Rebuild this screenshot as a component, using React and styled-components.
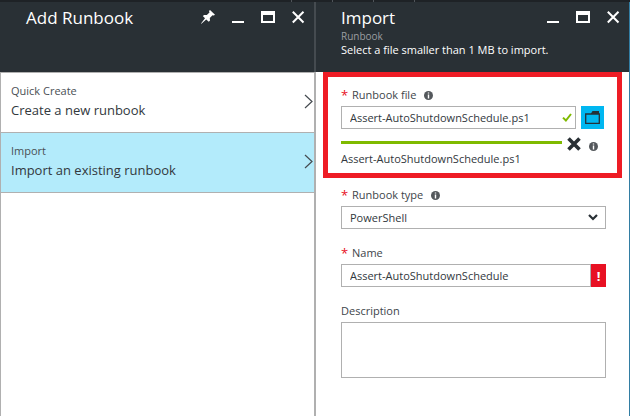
import React from "react";
import styled, { createGlobalStyle, css } from "styled-components";

const GlobalStyle = createGlobalStyle`
  *, *::before, *::after { box-sizing: border-box; }
  html, body { margin: 0; padding: 0; background: #fff; }
  body, button, input, select, textarea {
    font-family: "Open Sans", "Noto Sans", sans-serif;
    font-size: 11px;
    color: #32383d;
  }
  h1, p { margin: 0; }
`;

const Page = styled.div`
  display: flex;
  flex-direction: column;
  min-height: 100vh;
`;

const TopStrip = styled.div`
  display: flex;
  height: 2px;
  padding-left: 291px;
  background: #1e2226;
`;

const Tick = styled.span`
  width: 41px;
  border-left: 1px solid #50555a;
`;

const Blades = styled.main`
  flex: 1;
  display: grid;
  grid-template-columns: 158fr 157fr;
`;

const Blade = styled.section`
  display: flex;
  flex-direction: column;
  min-width: 0;
`;

const BladeHeader = styled.header`
  display: flex;
  justify-content: space-between;
  align-items: flex-start;
  height: 70px;
  padding: 5px 9px 0 ${(p) => (p.$divided ? "26px" : "25px")};
  background: #293035;
  color: #fff;
  border-right: ${(p) => (p.$divided ? "2px solid #454b50" : "1px solid #327da3")};
`;

const Heading = styled.div`
  min-width: 0;
  white-space: nowrap;
`;

const Title = styled.h1`
  font-size: 17px;
  line-height: 22px;
  font-weight: 400;
`;

const Subtitle = styled.p`
  font-size: 10px;
  line-height: 14px;
  color: #9b9ea1;
`;

const Hint = styled.p`
  font-size: 11px;
  line-height: 14px;
`;

const WindowControls = styled.div`
  display: flex;
  gap: 16px;
  padding-top: 3px;
  flex: none;
`;

const IconButton = styled.button`
  display: flex;
  align-items: center;
  justify-content: center;
  width: 14px;
  height: 14px;
  padding: 0;
  border: 0;
  background: none;
  color: inherit;
`;

const BladeBody = styled.div`
  flex: 1;
  background: #fff;
  border: 0 solid #b0b0b0;
  border-width: ${(p) => (p.$list ? "1px 2px 0 1px" : "0 1px 0 0")};
  ${(p) => !p.$list && css`border-color: #327da3;`}
`;

const Choice = styled.button`
  display: flex;
  align-items: center;
  justify-content: space-between;
  width: 100%;
  height: 60px;
  padding: 0 1px 2px 10px;
  border: 0;
  border-bottom: 1px solid #b0b0b0;
  background: ${(p) => (p.$selected ? "#b3ebfb" : "#fff")};
  text-align: left;
`;

const ChoiceText = styled.span`
  display: flex;
  flex-direction: column;
`;

const ChoiceKind = styled.span`
  line-height: 18px;
  color: #4a4f54;
`;

const ChoiceName = styled.span`
  font-size: 13px;
  line-height: 21px;
`;

const Highlight = styled.div`
  margin: 0 7px;
  padding: 10px 11px 6px 13px;
  border: 5px solid #ee1c25;
`;

const Form = styled.form`
  display: flex;
  flex-direction: column;
  gap: 9px;
`;

const Fields = styled.div`
  display: flex;
  flex-direction: column;
  gap: 16px;
  padding: 0 23px 0 25px;
`;

const Field = styled.div`
  display: flex;
  flex-direction: column;
  gap: 3px;
`;

const LabelRow = styled.div`
  display: flex;
  align-items: center;
  gap: 8px;
  height: 16px;
`;

const Label = styled.label`
  display: flex;
  gap: 5px;
  line-height: 16px;
  color: #40454a;
`;

const Required = styled.span`
  width: 6px;
  font-size: 13px;
  color: #e81123;
`;

const ControlRow = styled.div`
  display: flex;
  gap: ${(p) => (p.$spaced ? "5px" : "0")};
  padding-right: ${(p) => (p.$spaced ? "2px" : "0")};
`;

const boxed = css`
  height: 23px;
  border: 1px solid #b0b0b0;
  border-radius: 0;
  background: #fff;
`;

const InputBox = styled.div`
  ${boxed}
  display: flex;
  align-items: center;
  flex: 1;
  min-width: 0;
  padding: 0 3px 0 8px;
`;

const TextInput = styled.input`
  flex: 1;
  width: 0;
  min-width: 0;
  height: 21px;
  padding: 0;
  border: 0;
  outline: 0;
  background: none;
`;

const FolderButton = styled(IconButton)`
  width: 23px;
  height: 23px;
  background: #00b7f1;
  color: #243038;
`;

const ErrorFlag = styled.span`
  display: flex;
  align-items: center;
  justify-content: center;
  width: 15px;
  height: 23px;
  background: #e81123;
  color: #fff;
  font-size: 13px;
  font-weight: 700;
`;

const SelectBox = styled.div`
  display: grid;
  align-items: center;
  > * { grid-area: 1 / 1; }
  > svg { justify-self: end; margin-right: 8px; pointer-events: none; }
`;

const Select = styled.select`
  ${boxed}
  width: 100%;
  padding: 0 24px 0 8px;
  appearance: none;
`;

const TextArea = styled.textarea`
  ${boxed}
  display: block;
  width: 100%;
  height: 56px;
  resize: none;
`;

const UploadRow = styled.div`
  display: flex;
  align-items: center;
  height: 14px;
  margin-top: 8px;
  padding-right: 8px;
  gap: 5px;
`;

const Progress = styled.div`
  flex: 1;
  height: 3px;
  margin-bottom: 3px;
  background: #7fba00;
`;

const InfoSlot = styled.span`
  display: flex;
  align-self: flex-end;
  margin-left: 3px;
`;

const FileName = styled.p`
  line-height: 16px;
`;

const PinIcon = () => (
  <svg width="14" height="14" viewBox="0 0 14 14" fill="currentColor" aria-hidden="true">
    <path d="M9 0 14 4.8 12.8 5.6 11.5 5.2 8.8 8 9 10.6 7.8 11.8 5.2 9.4 0.4 13.8 0 13.4 4 8.2 1.8 6 3.2 5 5.8 5.1 8.5 2.6 8 1z" />
  </svg>
);

const MinimizeIcon = () => (
  <svg width="14" height="14" viewBox="0 0 14 14" aria-hidden="true">
    <path d="M1 11h12v2H1z" fill="currentColor" />
  </svg>
);

const MaximizeIcon = () => (
  <svg width="14" height="14" viewBox="0 0 14 14" aria-hidden="true">
    <path d="M0 1h14v12H0zM2 5v6h10V5z" fill="currentColor" fillRule="evenodd" />
  </svg>
);

const CloseIcon = () => (
  <svg width="14" height="14" viewBox="0 0 14 14" aria-hidden="true">
    <path d="M1.8 1.8 12.5 12.5M12.5 1.8 1.8 12.5" stroke="currentColor" strokeWidth="2" fill="none" />
  </svg>
);

const ChevronRight = () => (
  <svg width="9" height="15" viewBox="0 0 9 15" aria-hidden="true">
    <path d="M1 1 8 7.5 1 14" stroke="#454b50" strokeWidth="1.2" fill="none" />
  </svg>
);

const ChevronDown = () => (
  <svg width="10" height="7" viewBox="0 0 10 7" aria-hidden="true">
    <path d="M1 1 5 5 9 1" stroke="#293035" strokeWidth="2.2" fill="none" />
  </svg>
);

const InfoIcon = () => (
  <svg width="9" height="9" viewBox="0 0 9 9" role="img" aria-label="Information">
    <circle cx="4.5" cy="4.5" r="4.5" fill="#54585c" />
    <path d="M3.8 1.4h1.4v1.2H3.8zM3.8 3.5h1.4v4H3.8z" fill="#fff" />
  </svg>
);

const CheckIcon = () => (
  <svg width="10" height="9" viewBox="0 0 10 9" role="img" aria-label="Valid">
    <path d="M1 4.6 3.9 7.5 9 1" stroke="#7fba00" strokeWidth="2" fill="none" />
  </svg>
);

const FolderIcon = () => (
  <svg width="15" height="13" viewBox="0 0 15 13" aria-hidden="true">
    <path d="M6 2.5 7.5 0H14V3H6z" fill="currentColor" />
    <path d="M.7 3H14.3V12.3H.7z" stroke="currentColor" strokeWidth="1.3" fill="none" />
  </svg>
);

const RemoveIcon = () => (
  <svg width="14" height="14" viewBox="0 0 14 14" aria-hidden="true">
    <path d="M1.5 1.5 12.5 12.5M12.5 1.5 1.5 12.5" stroke="#293035" strokeWidth="3.6" fill="none" />
  </svg>
);

function Controls({ pinned }) {
  return (
    <WindowControls>
      {pinned && <IconButton type="button" aria-label="Pin"><PinIcon /></IconButton>}
      <IconButton type="button" aria-label="Minimize"><MinimizeIcon /></IconButton>
      <IconButton type="button" aria-label="Maximize"><MaximizeIcon /></IconButton>
      <IconButton type="button" aria-label="Close"><CloseIcon /></IconButton>
    </WindowControls>
  );
}

function ChoiceRow({ kind, name, selected }) {
  return (
    <Choice type="button" $selected={selected} aria-pressed={!!selected}>
      <ChoiceText>
        <ChoiceKind>{kind}</ChoiceKind>
        <ChoiceName>{name}</ChoiceName>
      </ChoiceText>
      <ChevronRight />
    </Choice>
  );
}

function FieldLabel({ id, required, info, children }) {
  return (
    <LabelRow>
      <Label htmlFor={id}>
        {required && <Required>*</Required>}
        {children}
      </Label>
      {info && <InfoIcon />}
    </LabelRow>
  );
}

export default function App() {
  return (
    <Page>
      <GlobalStyle />
      <TopStrip>
        <Tick /><Tick /><Tick /><Tick />
      </TopStrip>
      <Blades>
        <Blade>
          <BladeHeader $divided>
            <Heading><Title>Add Runbook</Title></Heading>
            <Controls pinned />
          </BladeHeader>
          <BladeBody $list>
            <ChoiceRow kind="Quick Create" name="Create a new runbook" />
            <ChoiceRow kind="Import" name="Import an existing runbook" selected />
          </BladeBody>
        </Blade>
        <Blade>
          <BladeHeader>
            <Heading>
              <Title>Import</Title>
              <Subtitle>Runbook</Subtitle>
              <Hint>Select a file smaller than 1 MB to import.</Hint>
            </Heading>
            <Controls />
          </BladeHeader>
          <BladeBody>
            <Form>
              <Highlight>
                <Field>
                  <FieldLabel id="file" required info>Runbook file</FieldLabel>
                  <ControlRow $spaced>
                    <InputBox>
                      <TextInput id="file" defaultValue="Assert-AutoShutdownSchedule.ps1" />
                      <CheckIcon />
                    </InputBox>
                    <FolderButton type="button" aria-label="Browse"><FolderIcon /></FolderButton>
                  </ControlRow>
                </Field>
                <UploadRow>
                  <Progress role="progressbar" aria-valuenow={100} aria-label="Upload" />
                  <IconButton type="button" aria-label="Remove file"><RemoveIcon /></IconButton>
                  <InfoSlot><InfoIcon /></InfoSlot>
                </UploadRow>
                <FileName>Assert-AutoShutdownSchedule.ps1</FileName>
              </Highlight>
              <Fields>
                <Field>
                  <FieldLabel id="type" required info>Runbook type</FieldLabel>
                  <SelectBox>
                    <Select id="type" defaultValue="PowerShell"><option>PowerShell</option></Select>
                    <ChevronDown />
                  </SelectBox>
                </Field>
                <Field>
                  <FieldLabel id="name" required>Name</FieldLabel>
                  <ControlRow>
                    <InputBox>
                      <TextInput id="name" defaultValue="Assert-AutoShutdownSchedule" />
                    </InputBox>
                    <ErrorFlag>!</ErrorFlag>
                  </ControlRow>
                </Field>
                <Field>
                  <FieldLabel id="description">Description</FieldLabel>
                  <TextArea id="description" />
                </Field>
              </Fields>
            </Form>
          </BladeBody>
        </Blade>
      </Blades>
    </Page>
  );
}
